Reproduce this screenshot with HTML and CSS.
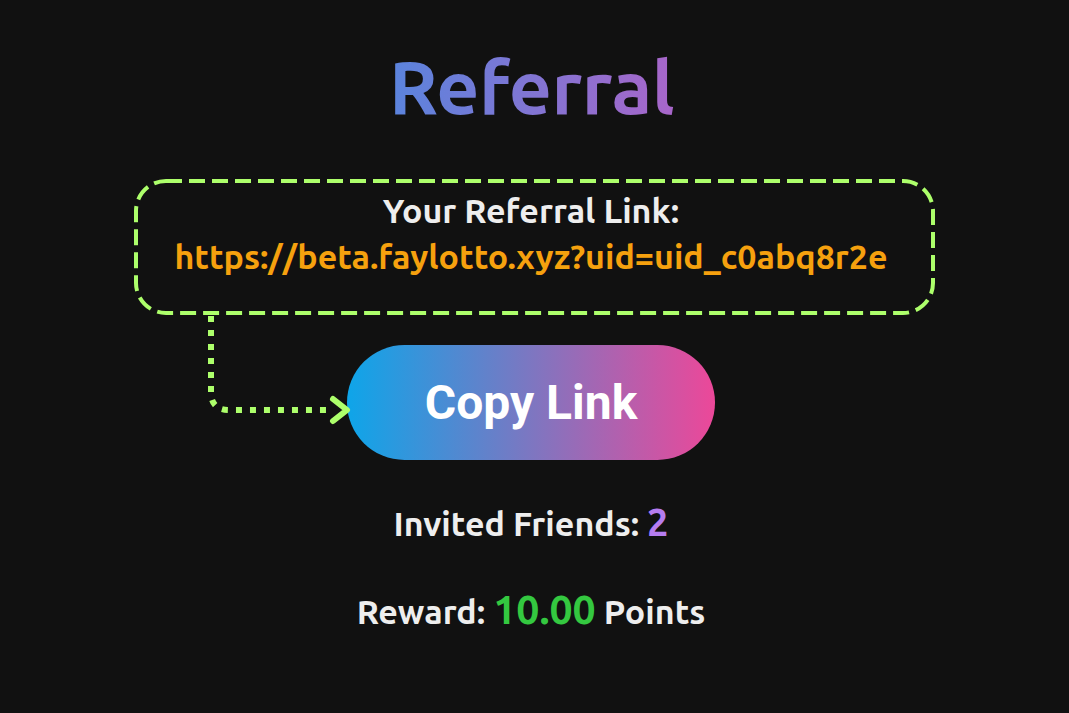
FILE: index.html
```html
<!DOCTYPE html>
<html>
<head>
<meta charset="utf-8">
<link rel="stylesheet" href="styles.css">
</head>
<body>
<main class="page">
  <h1 class="title">Referral</h1>
  <section class="link-box">
    <svg class="box-border" width="801" height="136" viewBox="0 0 801 136">
      <rect x="2" y="2" width="797" height="132" rx="30" ry="30" fill="none" stroke="#adff6b" stroke-width="4" stroke-dasharray="16 7"/>
    </svg>
    <div class="link-label">Your Referral Link:</div>
    <div class="link-url">https://beta.faylotto.xyz?uid=uid_c0abq8r2e</div>
  </section>
  <button class="copy-btn">Copy Link</button>
  <p class="stat friends">Invited Friends: <span class="num-purple">2</span></p>
  <p class="stat reward">Reward: <span class="num-green">10.00</span> Points</p>
  <svg class="connector" width="1069" height="713" viewBox="0 0 1069 713">
    <path d="M211 316 V392 Q211 410 229 410 H330" fill="none" stroke="#adff6b" stroke-width="6" stroke-dasharray="6 8"/>
    <path d="M333 399 L347 410 L333 421" fill="none" stroke="#adff6b" stroke-width="6" stroke-linecap="round" stroke-linejoin="round"/>
  </svg>
</main>
</body>
</html>
```
FILE: styles.css
```css
html, body {
  margin: 0;
  padding: 0;
  background: #111111;
}
body {
  width: 1069px;
  height: 713px;
  overflow: hidden;
  font-family: "Ubuntu", "Open Sans", sans-serif;
}
.page {
  position: relative;
  width: 1069px;
  height: 713px;
  display: flex;
  flex-direction: column;
  align-items: center;
}
.title {
  margin: 43px 0 0 -6px;
  height: 86px;
  font-size: 75px;
  line-height: 86px;
  font-weight: 700;
  letter-spacing: -0.5px;
  background: linear-gradient(90deg, #5a84dd, #a866c9);
  -webkit-background-clip: text;
  background-clip: text;
  color: transparent;
}
.link-box {
  position: relative;
  margin-top: 50px;
  width: 801px;
  height: 136px;
  box-sizing: border-box;
  display: flex;
  flex-direction: column;
  align-items: center;
  padding-top: 11px;
  padding-right: 7px;
  gap: 6px;
}
.box-border {
  position: absolute;
  left: 0;
  top: 0;
}
.link-label {
  color: #eeeeee;
  font-size: 34px;
  font-weight: 700;
  line-height: 40px;
}
.link-url {
  color: #f6a10e;
  font-size: 34px;
  font-weight: 700;
  line-height: 40px;
}
.copy-btn {
  margin-top: 30px;
  margin-left: -7px;
  width: 368px;
  height: 115px;
  border: none;
  border-radius: 58px;
  background: linear-gradient(90deg, #0ea5e9, #ec4899);
  color: #ffffff;
  font-family: "Roboto", sans-serif;
  font-weight: 700;
  font-size: 48px;
  padding: 0;
}
.stat {
  margin: 0 0 0 -7px;
  color: #eeeeee;
  font-weight: 700;
  font-size: 34px;
  line-height: 42px;
}
.friends {
  margin-top: 41px;
}
.reward {
  margin-top: 44px;
}
.num-purple {
  color: #b67df0;
  font-size: 38px;
}
.num-green {
  color: #34c840;
  font-size: 41px;
}
.connector {
  position: absolute;
  left: 0;
  top: 0;
  pointer-events: none;
}
```
